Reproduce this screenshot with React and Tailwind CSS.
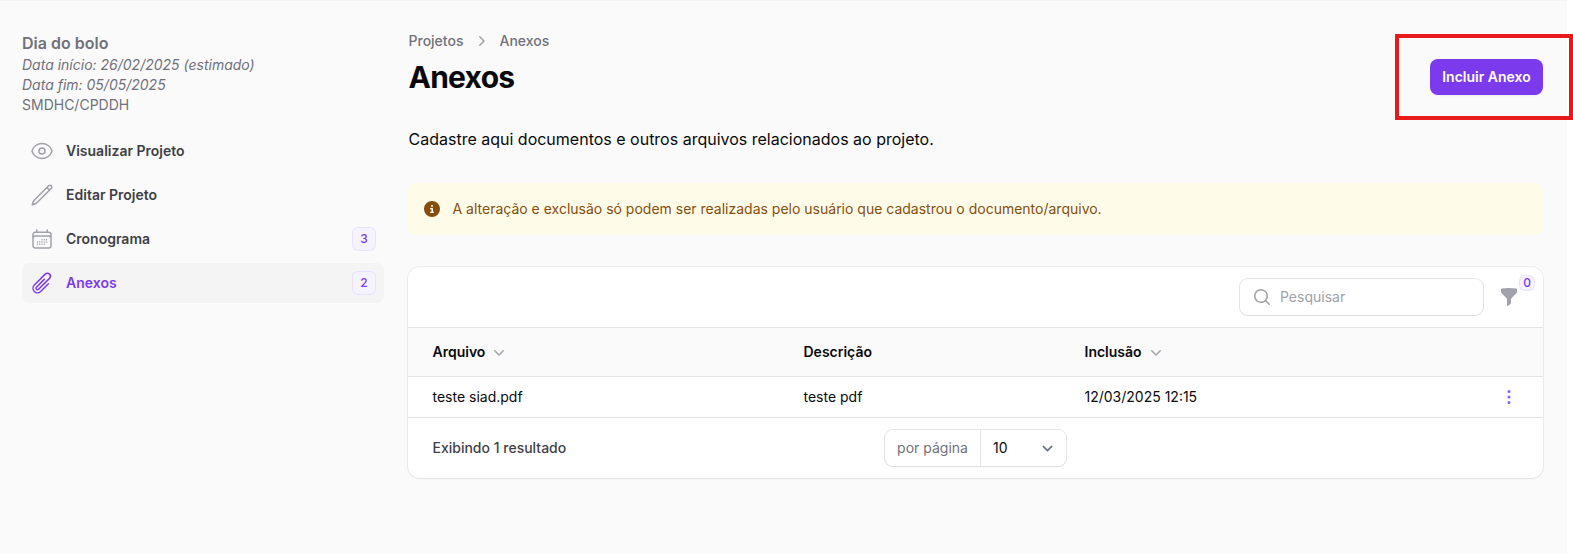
import React from 'react';
import { HiOutlineEye, HiOutlinePencil, HiOutlineCalendarDays, HiOutlinePaperClip } from 'react-icons/hi2';
import { FaCircleInfo } from 'react-icons/fa6';

const items = [
  { label: 'Visualizar Projeto', icon: HiOutlineEye },
  { label: 'Editar Projeto', icon: HiOutlinePencil },
  { label: 'Cronograma', icon: HiOutlineCalendarDays, badge: '3' },
  { label: 'Anexos', icon: HiOutlinePaperClip, badge: '2', active: true },
];

// Small solid icons drawn on a 20px grid.
function MiniIcon({ d, className }) {
  return (
    <svg viewBox="0 0 20 20" fill="currentColor" className={`size-5 shrink-0 ${className}`} aria-hidden="true">
      <path fillRule="evenodd" clipRule="evenodd" d={d} />
    </svg>
  );
}

const chevronDown =
  'M5.22 8.22a.75.75 0 0 1 1.06 0L10 11.94l3.72-3.72a.75.75 0 1 1 1.06 1.06l-4.25 4.25a.75.75 0 0 1-1.06 0L5.22 9.28a.75.75 0 0 1 0-1.06Z';
const chevronRight =
  'M8.22 5.22a.75.75 0 0 1 1.06 0l4.25 4.25a.75.75 0 0 1 0 1.06l-4.25 4.25a.75.75 0 0 1-1.06-1.06L11.94 10 8.22 6.28a.75.75 0 0 1 0-1.06Z';
const magnifier =
  'M9 3.5a5.5 5.5 0 1 0 0 11 5.5 5.5 0 0 0 0-11ZM2 9a7 7 0 1 1 12.452 4.391l3.328 3.329a.75.75 0 1 1-1.06 1.06l-3.329-3.328A7 7 0 0 1 2 9Z';
const funnel =
  'M2.628 1.601C5.028 1.206 7.49 1 10 1s4.973.206 7.372.601a.75.75 0 0 1 .628.74v2.288a2.25 2.25 0 0 1-.659 1.59l-4.682 4.683a2.25 2.25 0 0 0-.659 1.59v3.037c0 .684-.31 1.33-.844 1.757l-1.937 1.55A.75.75 0 0 1 8 18.25v-5.757a2.25 2.25 0 0 0-.659-1.591L2.659 6.22A2.25 2.25 0 0 1 2 4.629V2.34a.75.75 0 0 1 .628-.74Z';
const ellipsis =
  'M10 3a1.5 1.5 0 1 1 0 3 1.5 1.5 0 0 1 0-3ZM10 8.5a1.5 1.5 0 1 1 0 3 1.5 1.5 0 0 1 0-3ZM11.5 15.5a1.5 1.5 0 1 0-3 0 1.5 1.5 0 0 0 3 0Z';

function NavItem({ label, icon: Icon, badge, active }) {
  return (
    <li className={`flex h-10 items-center gap-3 rounded-lg px-2 ${active ? 'bg-zinc-100' : ''}`}>
      <Icon className={`size-6 ${active ? 'text-[#7c3aed]' : 'text-[#a1a1aa]'}`} />
      <span className={`flex-1 text-sm font-semibold ${active ? 'text-[#7c3aed]' : 'text-[#3f3f46]'}`}>{label}</span>
      {badge && (
        <span className="flex size-6 items-center justify-center rounded-md bg-[#f5f3ff] text-xs font-medium text-[#7c3aed] ring-1 ring-inset ring-[#7c3aed]/10">
          {badge}
        </span>
      )}
    </li>
  );
}

function Sidebar() {
  return (
    <aside className="w-[362px] shrink-0 pt-[30px] text-[#71717a]">
      <h2 className="text-base font-semibold">Dia do bolo</h2>
      <p className="text-sm italic">Data início: 26/02/2025 (estimado)</p>
      <p className="text-sm italic">Data fim: 05/05/2025</p>
      <p className="text-sm">SMDHC/CPDDH</p>
      <ul className="mt-4 flex flex-col gap-1">
        {items.map((item) => (
          <NavItem key={item.label} {...item} />
        ))}
      </ul>
    </aside>
  );
}

const columns = 'grid grid-cols-[371px_281px_1fr_68px] items-center pl-[24.5px] text-sm';

function FilesTable() {
  return (
    <section className="mt-8 rounded-xl bg-white shadow-xs ring-1 ring-[#09090b]/5">
      <div className="flex h-[60px] items-center justify-end gap-4 pr-6">
        <div className="flex h-9 w-[243px] items-center gap-2 rounded-lg pl-3 shadow-xs ring-1 ring-[#09090b]/10">
          <MiniIcon d={magnifier} className="text-[#a1a1aa]" />
          <span className="text-sm text-[#a1a1aa]">Pesquisar</span>
        </div>
        <div className="relative flex size-5 items-center justify-center">
          <MiniIcon d={funnel} className="text-[#a1a1aa]" />
          <span className="absolute -top-3 left-5 flex h-4 w-4 items-center justify-center rounded-md bg-[#f5f3ff] text-xs font-medium text-[#7c3aed] ring-1 ring-inset ring-[#7c3aed]/10">
            0
          </span>
        </div>
      </div>
      <div className={`${columns} h-[50px] border-y border-zinc-200 bg-zinc-50 font-semibold text-[#09090b]`}>
        <span className="flex items-center gap-1">
          Arquivo <MiniIcon d={chevronDown} className="text-[#a1a1aa]" />
        </span>
        <span>Descrição</span>
        <span className="flex items-center gap-1">
          Inclusão <MiniIcon d={chevronDown} className="text-[#a1a1aa]" />
        </span>
      </div>
      <div className={`${columns} h-[41px] border-b border-zinc-200 text-[#09090b]`}>
        <span>teste siad.pdf</span>
        <span>teste pdf</span>
        <span>12/03/2025 12:15</span>
        <MiniIcon d={ellipsis} className="ml-6 text-[#8b5cf6]" />
      </div>
      <div className="grid h-[60px] grid-cols-[1fr_auto_1fr] items-center px-6 text-sm">
        <span className="pl-[0.5px] font-medium text-[#3f3f46]">Exibindo 1 resultado</span>
        <div className="flex h-9 w-[181px] rounded-lg shadow-xs ring-1 ring-[#09090b]/10">
          <span className="flex w-24 items-center justify-center border-r border-zinc-200 text-[#71717a]">por página</span>
          <span className="flex flex-1 items-center justify-between pr-2 pl-3 text-[#09090b]">
            10
            <svg viewBox="0 0 20 20" fill="none" className="size-[21px]" aria-hidden="true">
              <path d="m6 8 4 4 4-4" stroke="#6b7280" strokeWidth="1.5" strokeLinecap="round" strokeLinejoin="round" />
            </svg>
          </span>
        </div>
      </div>
    </section>
  );
}

export default function App() {
  return (
    <div className="flex h-[554px] bg-white font-['Inter',sans-serif]">
      <div className="flex w-[1567px] gap-6 border-t border-zinc-100 bg-[#fafafa] pr-6 pl-[22px]">
        <Sidebar />
        <main className="min-w-0 flex-1 pt-[30px]">
          <div className="relative flex items-center justify-between">
            <div className="pl-[0.5px]">
              <nav className="flex items-center gap-2 text-sm font-medium text-[#71717a]">
                <span>Projetos</span>
                <MiniIcon d={chevronRight} className="text-[#a1a1aa]" />
                <span>Anexos</span>
              </nav>
              <h1 className="mt-2 text-3xl font-bold tracking-tight text-[#09090b]">Anexos</h1>
            </div>
            <button className="mt-[28px] h-9 w-[113px] rounded-lg bg-[#7c3aed] text-sm font-semibold text-white shadow-xs">
              Incluir Anexo
            </button>
            <div className="absolute -right-[30px] top-[3px] h-[86px] w-[178px] border-4 border-[#e81919]" />
          </div>
          <p className="mt-8 pl-[0.5px] text-base text-[#09090b]">Cadastre aqui documentos e outros arquivos relacionados ao projeto.</p>
          <div className="mt-8 flex h-[52px] items-center gap-3 rounded-lg bg-[#fefce8] px-4 text-sm text-[#854d0e]">
            <FaCircleInfo className="size-4" />
            <span className="pl-[0.5px]">A alteração e exclusão só podem ser realizadas pelo usuário que cadastrou o documento/arquivo.</span>
          </div>
          <FilesTable />
        </main>
      </div>
    </div>
  );
}
